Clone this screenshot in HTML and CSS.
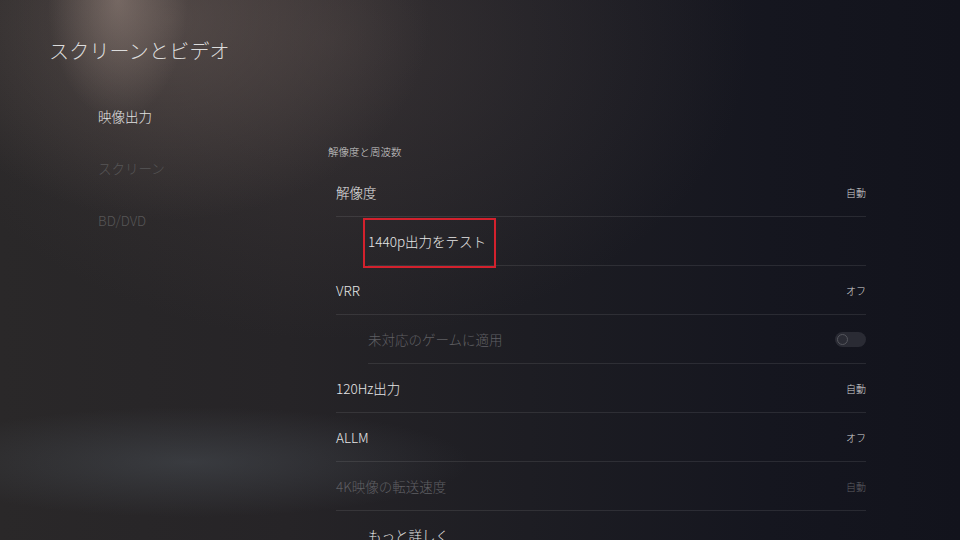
FILE: index.html
```html
<!DOCTYPE html>
<html lang="ja">
<head>
<meta charset="utf-8">
<title>スクリーンとビデオ</title>
<link rel="stylesheet" href="styles.css">
</head>
<body>
<div class="page">
  <h1 class="title">スクリーンとビデオ</h1>
  <div class="main">
    <nav class="nav">
      <div class="nav-item active">映像出力</div>
      <div class="nav-item">スクリーン</div>
      <div class="nav-item">BD/DVD</div>
    </nav>
    <section class="content">
      <div class="section-head">解像度と周波数</div>
      <div class="row"><span class="label">解像度</span><span class="value">自動</span></div>
      <div class="row sub"><span class="label">1440p出力をテスト</span><span class="mark"></span></div>
      <div class="row"><span class="label">VRR</span><span class="value">オフ</span></div>
      <div class="row sub disabled"><span class="label">未対応のゲームに適用</span><span class="toggle"><span class="knob"></span></span></div>
      <div class="row"><span class="label">120Hz出力</span><span class="value">自動</span></div>
      <div class="row"><span class="label">ALLM</span><span class="value">オフ</span></div>
      <div class="row disabled"><span class="label">4K映像の転送速度</span><span class="value">自動</span></div>
      <div class="row sub last"><span class="label">もっと詳しく</span></div>
    </section>
  </div>
</div>
</body>
</html>
```
FILE: styles.css
```css
* { box-sizing: border-box; margin: 0; padding: 0; }
html, body { width: 960px; height: 540px; overflow: hidden; background: #1a1a20; }
body { font-family: "Noto Sans CJK JP", "Noto Sans", sans-serif; font-weight: 300; color: #e4e4e4; }

.page {
  width: 960px;
  height: 540px;
  overflow: hidden;
  padding: 38px 0 0 49px;
  background:
    radial-gradient(ellipse 70px 120px at 118px 0px, rgba(170,150,140,0.45), rgba(170,150,140,0) 100%),
    radial-gradient(ellipse 260px 200px at 170px 20px, rgba(120,104,98,0.45), rgba(120,104,98,0) 100%),
    radial-gradient(ellipse 420px 300px at 330px 40px, rgba(90,78,76,0.35), rgba(90,78,76,0) 100%),
    radial-gradient(ellipse 280px 55px at 190px 462px, rgba(84,92,100,0.4), rgba(84,92,100,0) 100%),
    linear-gradient(90deg, #2a2829 0%, #262427 30%, #1d1d23 55%, #15161f 80%, #12131c 100%);
}

.title {
  font-size: 20px;
  font-weight: 300;
  line-height: 26px;
  color: #dcdcdc;
  letter-spacing: 0.2px;
}

.main {
  display: flex;
  margin-top: 26px;
}

.nav {
  width: 279px;
  padding-left: 49px;
}
.nav-item {
  height: 52px;
  line-height: 52px;
  font-size: 13.5px;
  color: #575657;
}
.nav-item.active { color: #e2e2e2; }

.content {
  width: 538px;
  padding-top: 54px;
}

.section-head {
  font-size: 10.5px;
  line-height: 16px;
  color: #cfcfcf;
  margin-bottom: 8px;
}

.row {
  position: relative;
  margin-left: 8px;
  height: 49px;
  border-bottom: 1px solid rgba(255,255,255,0.09);
  display: flex;
  align-items: center;
  justify-content: space-between;
}
.row.sub { margin-left: 40px; }
.row.last { align-items: flex-start; padding-top: 14px; }

.label { font-size: 13.5px; color: #e6e6e6; white-space: nowrap; }
.value { font-size: 10px; color: #d6d6d6; }
.disabled .label, .disabled .value { color: #5f5f63; }

.mark {
  position: absolute;
  left: -5px;
  top: 1px;
  width: 133px;
  height: 50px;
  border: 2px solid #d3212d;
}

.toggle {
  width: 31px;
  height: 15px;
  border-radius: 8px;
  background: #2a2b34;
  display: flex;
  align-items: center;
  padding-left: 2px;
}
.knob {
  width: 11px;
  height: 11px;
  border-radius: 50%;
  border: 1.5px solid #55565d;
}
```
